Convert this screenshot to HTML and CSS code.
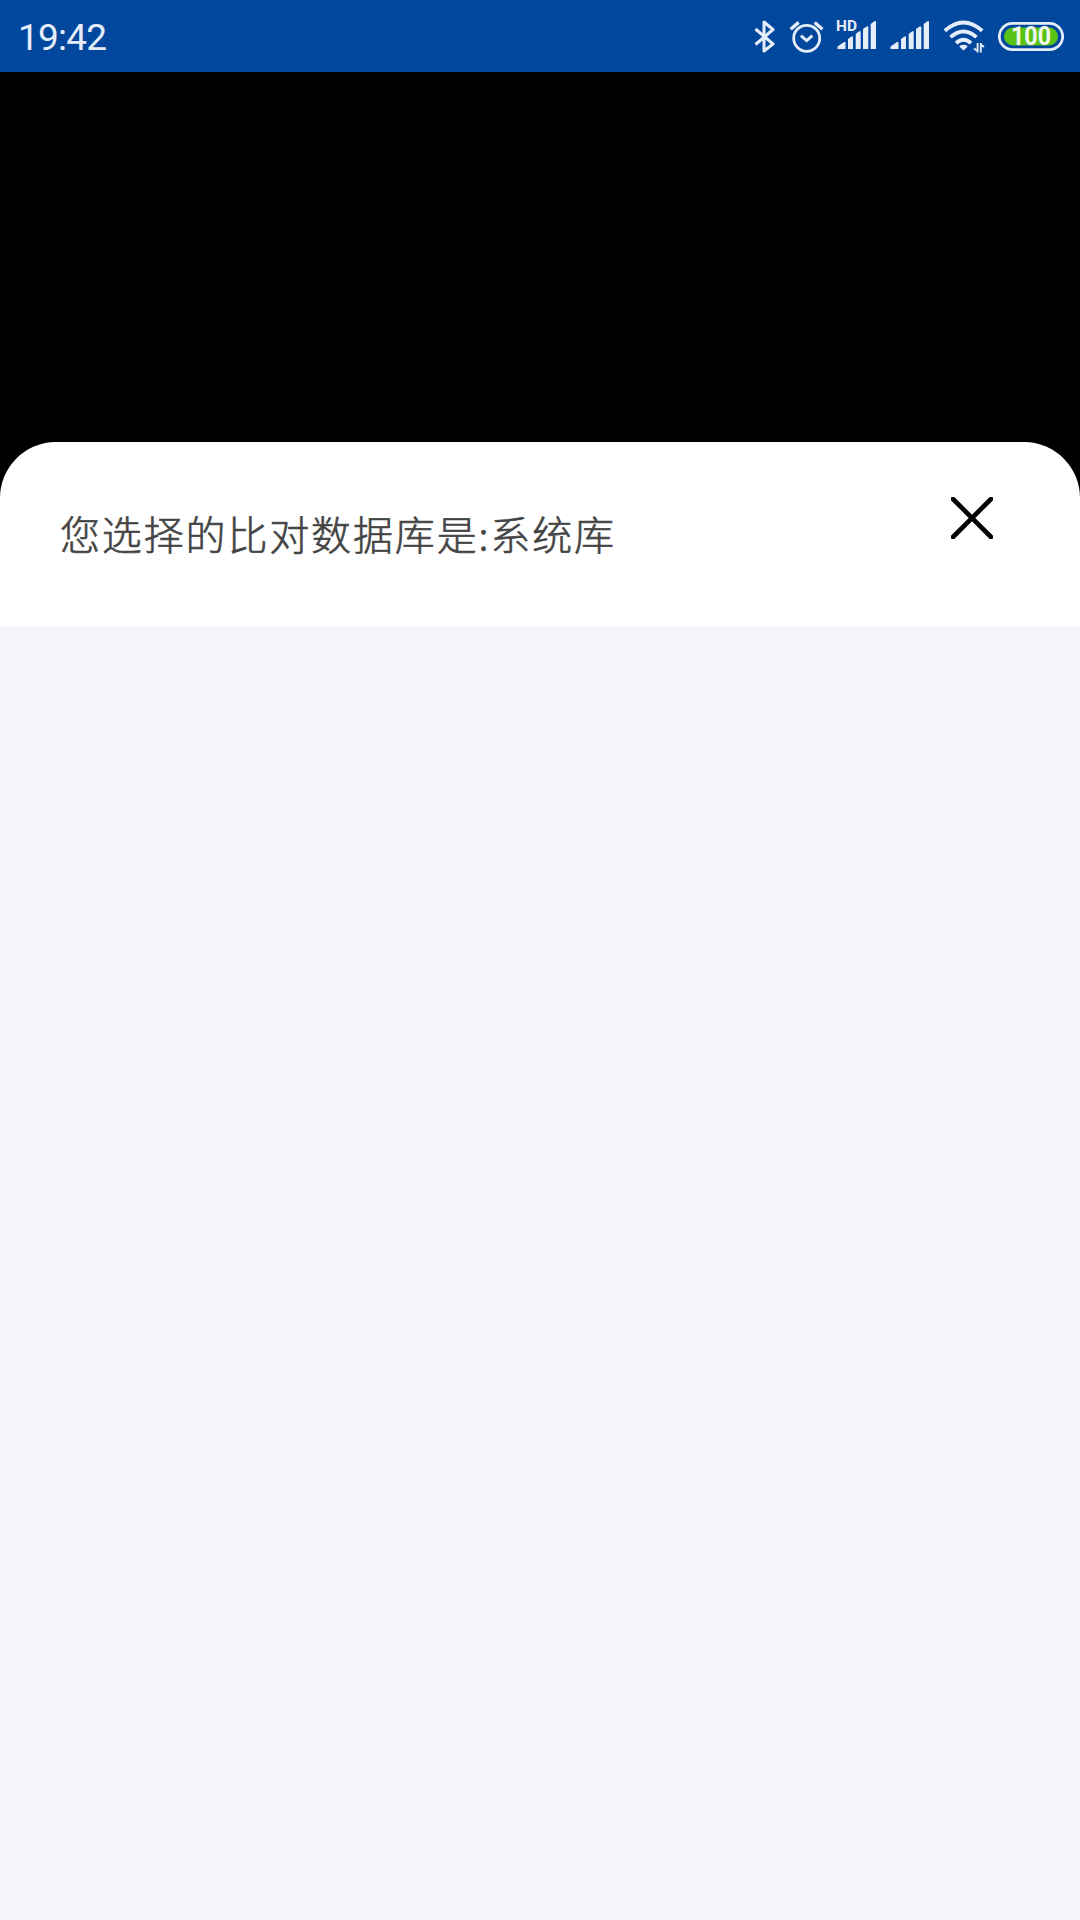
FILE: index.html
```html
<!DOCTYPE html>
<html lang="zh-CN">
<head>
    <meta charset="UTF-8">
    <meta name="viewport" content="width=device-width, initial-scale=1.0">
    <title>比对数据库</title>
    <link rel="stylesheet" href="styles.css">
</head>
<body>
    <header class="status-bar">
        <span class="time">19:42</span>
        <div class="status-icons">
            <!-- bluetooth -->
            <svg width="24" height="36" viewBox="0 0 24 36" fill="none" stroke="#e6edfa" stroke-width="3">
                <path d="M2.5 11L20 26L11 33V4L20 11.5L2.5 26.5" stroke-linejoin="round"/>
            </svg>
            <!-- alarm -->
            <svg width="36" height="36" viewBox="0 0 36 36" fill="none" stroke="#e6edfa" stroke-width="2.8">
                <circle cx="18.7" cy="20.3" r="13"/>
                <path d="M12.9 17.6L18.7 22.6L24.3 17.6" stroke-width="3"/>
                <path d="M2.7 11.2L10.7 4.4M34.4 11.2L26.7 4.4" stroke-width="3.4"/>
            </svg>
            <!-- signal, sim 1 -->
            <svg class="signal" width="42" height="36" viewBox="0 0 42 36" fill="#e6edfa">
                <text class="hd" x="1" y="13" textLength="21" lengthAdjust="spacingAndGlyphs">HD</text>
                <path d="M2.5 31V28.5L9 24H10.5V31Z"/>
                <path d="M13 31V21L16.5 18.5H18V31Z"/>
                <path d="M20.7 31V16L24.2 13.3H25.7V31Z"/>
                <path d="M28 31V11L31.7 8.4H33.3V31Z"/>
                <path d="M35.7 31V6L39.4 3.3H41V31Z"/>
            </svg>
            <!-- signal, sim 2 -->
            <svg class="signal" width="42" height="36" viewBox="0 0 42 36" fill="#e6edfa">
                <path d="M2.5 31V28.5L9 24H10.5V31Z"/>
                <path d="M13 31V21L16.5 18.5H18V31Z"/>
                <path d="M20.7 31V16L24.2 13.3H25.7V31Z"/>
                <path d="M28 31V11L31.7 8.4H33.3V31Z"/>
                <path d="M35.7 31V6L39.4 3.3H41V31Z"/>
            </svg>
            <!-- wifi -->
            <svg class="wifi" width="44" height="36" viewBox="0 0 44 36" fill="none" stroke="#e6edfa" stroke-width="3.8">
                <path d="M2.8 12.8Q21.5 -3.6 40.2 12.8"/>
                <path d="M8.5 19.2Q21.5 7.6 34.5 19.2"/>
                <path d="M14 25.2Q21.5 18.4 29 25.2"/>
                <path d="M21.5 32.5L17.7 29V27.8Q21.5 25.8 25.3 27.8V29Z" fill="#e6edfa" stroke="none"/>
                <path d="M35.6 25V34.5M32 30.5L35.6 33M38.8 34.5V25M42 29L38.8 26.5" stroke-width="1.9"/>
            </svg>
            <!-- battery -->
            <svg class="battery" width="66" height="36" viewBox="0 0 66 36">
                <rect x="1.3" y="5.3" width="63.4" height="26.4" rx="13.2" fill="none" stroke="#e6edfa" stroke-width="2.8"/>
                <rect x="6" y="9.5" width="54" height="18" rx="9" fill="#59c315"/>
                <text class="level" x="13" y="27" textLength="40" lengthAdjust="spacingAndGlyphs">100</text>
            </svg>
        </div>
    </header>

    <main class="sheet">
        <div class="sheet-header">
            <h1>您选择的比对数据库是:系统库</h1>
            <button class="close" aria-label="关闭">
                <svg width="42" height="42" viewBox="0 0 42 42" stroke="#000" stroke-width="4.6" stroke-linecap="round">
                    <path d="M2 2L40 40M40 2L2 40"/>
                </svg>
            </button>
        </div>
        <div class="sheet-body"></div>
    </main>
</body>
</html>
```
FILE: styles.css
```css
* {
    box-sizing: border-box;
}
body {
    margin: 0;
    height: 1920px;
    display: flex;
    flex-direction: column;
    background-color: #000;
    font-family: "Noto Sans CJK SC", "Noto Sans", sans-serif;
}
.status-bar {
    height: 72px;
    padding: 0 16px 0 18px;
    display: flex;
    justify-content: space-between;
    align-items: center;
    background-color: #00479d;
    color: #e6edfa;
}
.time {
    font-family: Roboto, sans-serif;
    font-size: 37px;
    line-height: 40px;
    padding-top: 3px;
    letter-spacing: -0.8px;
}
.status-icons {
    display: flex;
}
.status-icons svg {
    display: block;
    margin-left: 11px;
}
.status-icons .wifi {
    margin-left: 12px;
}
.status-icons .battery {
    margin-left: 12px;
}
.hd {
    font: bold 15px Roboto, sans-serif;
}
.level {
    font: bold 26px Roboto, sans-serif;
    fill: #f3f9f1;
}
.sheet {
    flex: 1;
    margin-top: 370px;
    display: flex;
    flex-direction: column;
    background-color: #fff;
    border-radius: 56px 56px 0 0;
    overflow: hidden;
}
.sheet-header {
    height: 184px;
    padding: 0 87px 0 60px;
    display: flex;
    justify-content: space-between;
    align-items: flex-start;
}
h1 {
    margin: 61px 0 0;
    font-size: 40px;
    font-weight: 300;
    line-height: 60px;
    letter-spacing: 1.85px;
    color: #444;
    -webkit-text-stroke: 0.6px #444;
}
.close {
    margin-top: 55px;
    padding: 0;
    border: none;
    background: none;
    cursor: pointer;
}
.close svg {
    display: block;
}
.sheet-body {
    flex: 1;
    background-color: #f4f6fb;
}
```
